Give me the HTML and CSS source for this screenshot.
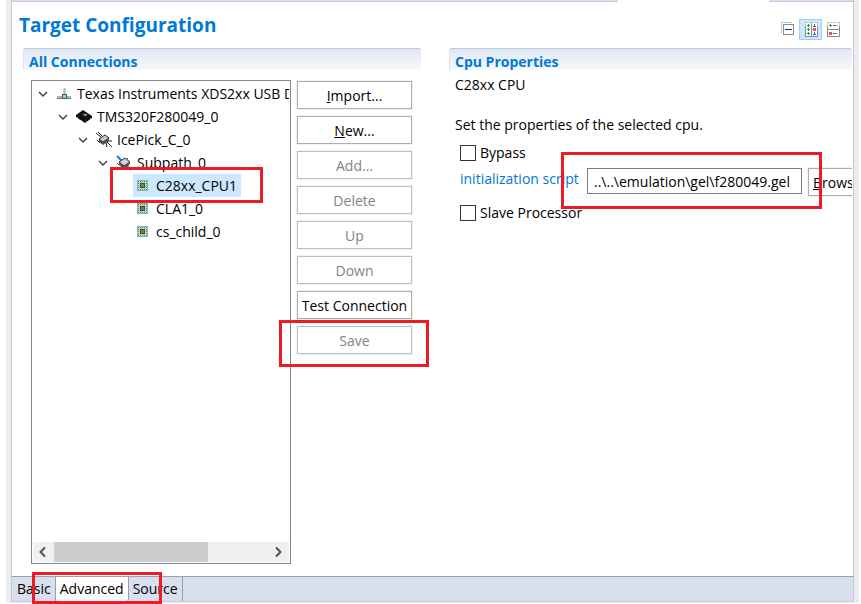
FILE: index.html
```html
<!DOCTYPE html>
<html lang="en">
<head>
<meta charset="utf-8">
<title>Target Configuration</title>
<link rel="stylesheet" href="styles.css">
</head>
<body>
<svg class="sprite" aria-hidden="true">
  <symbol id="chevron" viewBox="0 0 16 16"><path d="M4 6l4 4 4-4" fill="none" stroke="#444" stroke-width="1.5"/></symbol>
  <symbol id="core" viewBox="0 0 16 16">
    <rect x="2" y="2" width="11" height="11" fill="#8fa8ea"/>
    <rect x="3" y="3" width="9" height="9" fill="#d9efae"/>
    <path d="M3 3.500h9M3 11.500h9M3.500 3v9M11.500 3v9" fill="none" stroke="#2f9a3c" stroke-dasharray="1 1"/>
    <rect x="4" y="4" width="7" height="7" fill="#b9d98c"/>
    <rect x="5" y="5" width="5" height="5" fill="#4a4a4a"/>
    <rect x="6" y="6" width="3" height="3" fill="#777"/>
  </symbol>
</svg>
<div class="window">
  <div class="editor-tabs"><span></span><span></span></div>
  <header class="title-bar">
    <h1>Target Configuration</h1>
    <div class="tools">
      <button class="tool" type="button" aria-label="Collapse all">
        <svg width="16" height="16" viewBox="0 0 16 16"><path d="M1.500 12V1.500H12" fill="none" stroke="#a5cdcd"/><rect x="3.500" y="3.500" width="10" height="10" fill="#fff" stroke="#8c8c8c"/><path d="M5 8.500h7" stroke="#0b2d66"/></svg>
      </button>
      <button class="tool active" type="button" aria-label="Column layout">
        <svg width="16" height="16" viewBox="0 0 16 16"><rect x="2.500" y="1.500" width="12" height="14" fill="#fff" stroke="#8c8c8c"/><path d="M2.500 5V1.500h12V5" fill="none" stroke="#d2cf9c"/><path d="M8.500 2v13" stroke="#8c8c8c"/><path d="M4 4.500h3M4 8.500h3M4 12.500h3M5.500 3v3M5.500 7v3M5.500 11v3" stroke="#27a04b"/><path d="M10 5.500h3M10 13.500h3M11.500 3v3M11.500 11v3" stroke="#2a62d0"/><path d="M10 7h3v3h-3z" fill="#d95b55"/></svg>
      </button>
      <button class="tool" type="button" aria-label="Row layout">
        <svg width="16" height="16" viewBox="0 0 16 16"><rect x="1.500" y="1.500" width="12" height="14" fill="#fff" stroke="#8c8c8c"/><path d="M1.500 5V1.500h12V5" fill="none" stroke="#d2cf9c"/><path d="M1 8.500h12" stroke="#8c8c8c"/><path d="M3 4.500h3M4.500 3v3" stroke="#27a04b"/><path d="M3 11h3v3H3z" fill="#d95b55"/><path d="M7 4.500h3M7 12.500h3" stroke="#345fae"/><path d="M10 4.500h2M10 12.500h2" stroke="#aebfdf"/></svg>
      </button>
    </div>
  </header>
  <main>
    <section class="connections">
      <h2>All Connections</h2>
      <div class="connections-body">
        <div class="tree-box">
          <ul class="tree">
            <li>
              <div class="row"><svg class="twisty"><use href="#chevron"/></svg>
                <svg class="icon" viewBox="0 0 16 16"><path d="M1 11h14M8.500 2v8" stroke="#b3b0b8" stroke-width="2"/><path d="M1 12.500h14" stroke="#77737d"/><rect x="6.500" y="8.500" width="4" height="4" fill="#8fe09b" stroke="#23713d"/></svg>
                <span>Texas Instruments XDS2xx USB D</span></div>
              <ul>
                <li>
                  <div class="row"><svg class="twisty"><use href="#chevron"/></svg>
                    <svg class="icon" viewBox="0 0 16 16"><path d="M0 6l7-5 9 6v2l-7 5-9-6z" fill="#111"/><path d="M1 8l1 1M3 10l1 1M5 11l1 1M10 13l1-1M12 12l1-1M14 10l1-1" stroke="#999"/><path d="M7 5l3 2M9 5l2 1" stroke="#ccc"/></svg>
                    <span>TMS320F280049_0</span></div>
                  <ul>
                    <li>
                      <div class="row"><svg class="twisty"><use href="#chevron"/></svg>
                        <svg class="icon" viewBox="0 0 16 16"><path d="M0 1l5 4M2 0l4 4M10 9l6 6M10 10l1 5M11 9h5M1 8l3 3" stroke="#222"/><path d="M3 7l6-4 4 3v3l-6 4-4-3z" fill="#555"/><path d="M3 7l6-4 4 3-6 4z" fill="#c8c8c8" stroke="#333"/></svg>
                        <span>IcePick_C_0</span></div>
                      <ul>
                        <li>
                          <div class="row"><svg class="twisty"><use href="#chevron"/></svg>
                            <svg class="icon" viewBox="0 0 16 16"><path d="M1 1l14 14" stroke="#1675df" stroke-width="2"/><path d="M3 7l6-4 5 4v2l-6 5-5-4z" fill="#555"/><path d="M3 7l6-4 5 4-6 4z" fill="#d0d3d8" stroke="#333"/><path d="M1 8l2 2M12 3l-1 1" stroke="#444"/></svg>
                            <span>Subpath_0</span></div>
                          <ul class="cores">
                            <li><div class="row selected"><svg class="icon"><use href="#core"/></svg><span>C28xx_CPU1</span><i class="mark mark-cpu"></i></div></li>
                            <li><div class="row"><svg class="icon"><use href="#core"/></svg><span>CLA1_0</span></div></li>
                            <li><div class="row"><svg class="icon"><use href="#core"/></svg><span>cs_child_0</span></div></li>
                          </ul>
                        </li>
                      </ul>
                    </li>
                  </ul>
                </li>
              </ul>
            </li>
          </ul>
          <div class="scrollbar">
            <button type="button" aria-label="Scroll left"><svg viewBox="0 0 20 20"><path d="M12 5.500L7.500 10l4.500 4.500" fill="none" stroke="#505050" stroke-width="2"/></svg></button>
            <div class="track"><div class="thumb"></div></div>
            <button type="button" aria-label="Scroll right"><svg viewBox="0 0 20 20"><path d="M8 5.500l4.500 4.500L8 14.500" fill="none" stroke="#505050" stroke-width="2"/></svg></button>
          </div>
        </div>
        <div class="actions">
          <button class="btn" type="button"><u>I</u>mport...</button>
          <button class="btn" type="button"><u>N</u>ew...</button>
          <button class="btn" type="button" disabled>Add...</button>
          <button class="btn" type="button" disabled>Delete</button>
          <button class="btn" type="button" disabled>Up</button>
          <button class="btn" type="button" disabled>Down</button>
          <button class="btn" type="button">Test Connection</button>
          <div class="marked"><button class="btn" type="button" disabled>Save</button><i class="mark mark-save"></i></div>
        </div>
      </div>
    </section>
    <section class="properties">
      <h2>Cpu Properties</h2>
      <div class="properties-body">
        <p>C28xx CPU</p>
        <p class="hint">Set the properties of the selected cpu.</p>
        <label class="check"><input type="checkbox">Bypass</label>
        <div class="script-row">
          <a href="#script" id="script-label">initialization script</a>
          <div class="marked"><input class="path" type="text" aria-labelledby="script-label" value="..\..\emulation\gel\f280049.gel"><i class="mark mark-path"></i></div>
          <button class="btn browse" type="button"><u>B</u>rowse...</button>
        </div>
        <label class="check"><input type="checkbox">Slave Processor</label>
      </div>
    </section>
  </main>
  <nav class="page-tabs">
    <button type="button">Basic</button>
    <button class="current" type="button">Advanced</button>
    <button type="button">Source</button>
    <i class="mark mark-tabs"></i>
  </nav>
</div>
</body>
</html>
```

FILE: styles.css
```css
* { box-sizing: border-box; }

body {
  margin: 0;
  height: 100vh;
  padding: 0 2px 1px 6px;
  background: #fff;
  color: #000;
  font: 14px/20px "Open Sans", "Noto Sans", sans-serif;
  overflow: hidden;
}

h1, h2, p, ul { margin: 0; padding: 0; }
ul { list-style: none; }
button, input { font: inherit; color: inherit; margin: 0; }
button { padding: 0; }
.sprite { position: absolute; width: 0; height: 0; }

.window {
  display: flex;
  flex-direction: column;
  height: 100%;
  border: solid #ececec;
  border-width: 0 5px 1px;
  background: #fff;
}

.editor-tabs {
  display: flex;
  justify-content: space-between;
  flex: none;
  height: 2px;
  border: solid #c5c9df;
  border-width: 0 1px;
}
.editor-tabs span { background: #d9deee; border-bottom: 1px solid #c5c9df; }
.editor-tabs span:first-child { width: 72%; }
.editor-tabs span:last-child { width: 10%; }

.title-bar {
  display: flex;
  justify-content: space-between;
  align-items: center;
  flex: none;
  height: 46px;
  padding: 0 8px 0 7px;
  border: solid #c5c9df;
  border-width: 0 1px;
}
h1 { font-size: 19px; line-height: 28px; color: #0078d7; }
.tools { display: flex; margin-top: 8px; }
.tool {
  display: grid;
  place-items: center;
  width: 23px;
  height: 21px;
  border: 1px solid transparent;
  background: none;
}
.tool.active { border-color: #99d1ff; background: #cce8ff; }

main {
  display: grid;
  grid-template-columns: minmax(0, 398px) minmax(0, 1fr);
  gap: 28px;
  flex: 1;
  min-height: 0;
  padding: 0 1px 0 11px;
  border: solid #c5c9df;
  border-width: 0 1px;
}
section { display: flex; flex-direction: column; min-width: 0; min-height: 0; }
h2 {
  flex: none;
  height: 22px;
  padding-left: 5px;
  border-top: 1px solid #b5cadf;
  border-left: 1px solid #dde4ee;
  border-radius: 3px 3px 0 0;
  background: linear-gradient(#e1e7f2, #f6f9fc);
  color: #0078d7;
  font-size: 14px;
  line-height: 26px;
}

.connections-body {
  display: flex;
  gap: 6px;
  flex: 1;
  min-height: 0;
  padding: 10px 9px 12px 8px;
}
.tree-box {
  display: flex;
  flex-direction: column;
  flex: 1;
  min-width: 0;
  padding: 1px;
  border: 1px solid #828790;
}
.tree { flex: 1; overflow: hidden; }
.tree ul { padding-left: 20px; }
.row {
  position: relative;
  display: flex;
  align-items: center;
  height: 23px;
  padding-left: 2px;
  white-space: nowrap;
}
.twisty { flex: none; width: 16px; height: 16px; margin-right: 5px; }
.icon { flex: none; width: 16px; height: 16px; margin-right: 5px; }
.tree .cores { padding-left: 40px; }
.cores .row { width: fit-content; padding-right: 4px; }
.selected { background: #cce8ff; }

.scrollbar { display: flex; flex: none; height: 20px; background: #f0f0f0; }
.scrollbar button { width: 21px; border: 0; background: none; }
.scrollbar svg { display: block; width: 20px; height: 20px; }
.track { flex: 1; }
.thumb { width: 72%; height: 100%; background: #cdcdcd; }

.actions { display: flex; flex-direction: column; gap: 7px; flex: none; width: 115px; padding-top: 1px; }
.btn {
  flex: none;
  width: 100%;
  height: 28px;
  padding-top: 2px;
  border: 1px solid #adadad;
  background: #fff;
  box-shadow: 0 0 0 1px #f2f2f2;
  white-space: nowrap;
}
.btn:disabled { border-color: #bfbfbf; color: #838383; }

.properties-body { padding: 5px 0 0 6px; overflow: hidden; }
.hint { margin-top: 20px; }
.check { display: flex; align-items: center; gap: 4px; height: 20px; margin: 8px 0 0 5px; line-height: 22px; }
.check input {
  appearance: none;
  width: 16px;
  height: 16px;
  border: 1px solid #333;
  background: #fff;
}
.script-row { display: flex; gap: 6px; height: 32px; margin-left: 5px; padding-top: 5px; }
.script-row a { flex: none; width: 121px; color: #0078d7; line-height: 22px; text-decoration: none; white-space: nowrap; }
.script-row .marked { flex: none; width: 215px; }
.path { display: block; width: 100%; height: 26px; padding: 0 6px; border: 1px solid #7a7a7a; background: #fff; }
.browse { flex: none; width: 80px; padding-left: 4px; text-align: left; }

.page-tabs {
  position: relative;
  display: flex;
  flex: none;
  height: 26px;
  border: 1px solid #c5c9df;
  border-top-color: #a0a0a0;
  background: #d8dfef;
}
.page-tabs button { padding: 0 4px 0 5px; border: 0; border-right: 1px solid #9a9da5; background: none; }
.page-tabs .current { padding-left: 4px; background: #fff; border-radius: 0 0 3px 3px; }
.page-tabs .current + button { padding-left: 4px; }

/* Red callout frames around the highlighted controls */
.marked { position: relative; }
.mark { position: absolute; z-index: 2; border: 3px solid #ed1c24; pointer-events: none; }
.mark-cpu { inset: -7px -22px -6px -23px; }
.mark-save { inset: -6px -17px -13px -18px; }
.mark-path { inset: -16px -20px -14px -26px; }
.mark-tabs { left: 20px; width: 130px; top: -5px; bottom: -3px; }
```
